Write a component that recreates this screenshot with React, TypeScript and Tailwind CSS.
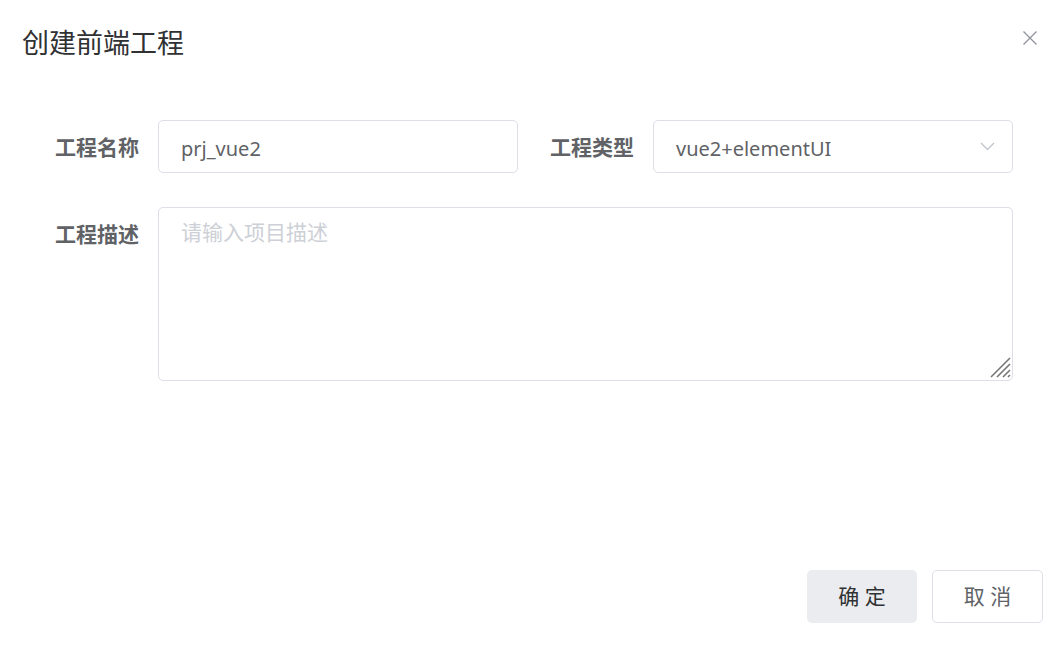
import { useState } from "react"

const font = { fontFamily: '"Noto Sans", "Noto Sans CJK SC", sans-serif' }

const Label = ({ text, className = "" }: { text: string, className?: string }) => (
    <div className={`${className} shrink-0 h-[53px] flex items-center justify-end pr-[19px] pt-[3px] text-[21px] font-bold text-[#606266]`}>
        {text}
    </div>
)

const App = () => {
    const [ name, setName ] = useState("prj_vue2")
    const [ desc, setDesc ] = useState("")

    return (
        <div style={font} className="w-[1064px] h-[645px] bg-white px-[21px] flex flex-col">
            <div className="pt-[25px] flex justify-between items-start">
                <span className="text-[27px] leading-[36px] text-[#303133] pl-[1px]">创建前端工程</span>
                <button className="mt-[5px] mr-[5px] text-[#909399]">
                    <svg width="16" height="16" viewBox="0 0 16 16" stroke="currentColor" strokeWidth="1.3" fill="none">
                        <path d="M1.5 1.5 L14.5 14.5 M14.5 1.5 L1.5 14.5" />
                    </svg>
                </button>
            </div>

            <div className="mt-[59px] flex">
                <Label text="工程名称" className="w-[137px]" />
                <input
                    className="w-[360px] h-[53px] border border-[#dcdfe6] rounded-[5px] px-[22px] pt-[4px] text-[20px] text-[#606266] outline-0"
                    value={name}
                    onChange={e => setName(e.target.value)}
                />
                <Label text="工程类型" className="w-[135px]" />
                <div className="w-[360px] h-[53px] border border-[#dcdfe6] rounded-[5px] pl-[22px] pr-[17px] flex items-center justify-between">
                    <span className="text-[20px] text-[#606266] pt-[4px]">vue2+elementUI</span>
                    <svg width="15" height="9" viewBox="0 0 15 9" fill="none" stroke="#c0c4cc" strokeWidth="1.3">
                        <path d="M1 1 L7.5 7.5 L14 1" />
                    </svg>
                </div>
            </div>

            <div className="mt-[34px] flex">
                <Label text="工程描述" className="w-[137px] items-start pt-[12px]" />
                <div className="relative">
                    <textarea
                        className="block w-[855px] h-[174px] resize-none border border-[#dcdfe6] rounded-[5px] px-[22px] pt-[9px] text-[20px] leading-[30px] text-[#606266] placeholder:text-[21px] placeholder:text-[#cdd0d6] outline-0"
                        placeholder="请输入项目描述"
                        value={desc}
                        onChange={e => setDesc(e.target.value)}
                    />
                    <svg className="absolute right-[2px] bottom-[3px] pointer-events-none" width="22" height="22" viewBox="0 0 22 22" stroke="#777" strokeWidth="1.6" fill="none">
                        <path d="M21 2 L2 21 M21 8 L8 21 M21 14 L14 21 M21 19 L19 21" />
                    </svg>
                </div>
            </div>

            <div className="mt-auto pb-[22px] flex justify-end gap-[15px]">
                <button className="w-[110px] h-[53px] rounded-[5px] bg-[#ebecf0] text-[21px] text-[#303133]">确 定</button>
                <button className="w-[111px] h-[53px] rounded-[5px] border border-[#dcdfe6] bg-white text-[21px] text-[#606266]">取 消</button>
            </div>
        </div>
    )
}

export default App
